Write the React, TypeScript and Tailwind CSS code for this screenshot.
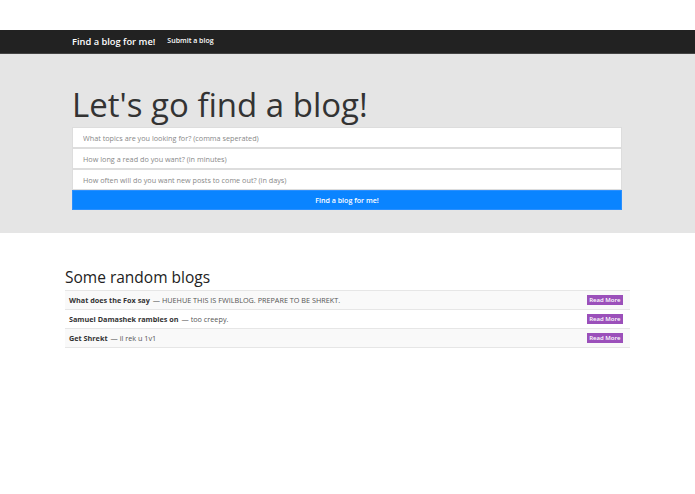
const blogs = [
  { title: "What does the Fox say", blurb: "HUEHUE THIS IS FWILBLOG. PREPARE TO BE SHREKT." },
  { title: "Samuel Damashek rambles on", blurb: "too creepy." },
  { title: "Get Shrekt", blurb: "il rek u 1v1" },
]

const fields = [
  "What topics are you looking for? (comma seperated)",
  "How long a read do you want? (in minutes)",
  "How often will do you want new posts to come out? (in days)",
]

export default function App() {
  return (
    <div className="min-h-[494px] bg-white pt-[30px] font-['Open_Sans',sans-serif]">
      <nav className="flex h-[24px] items-center border-b border-[#444] bg-[#222] px-[72px]">
        <span className="text-[9.3px] font-semibold text-white">Find a blog for me!</span>
        <span className="ml-[12px] text-[7px] font-semibold text-white">Submit a blog</span>
      </nav>
      <section className="bg-[#e5e5e5] px-[72px] pb-[23px] pt-[28px]">
        <h1 className="text-[33px] leading-[46px] text-[#333]">Let's go find a blog!</h1>
        <div className="mr-[1px] mt-[-1px] flex flex-col">
          {fields.map((f) => (
            <input
              key={f}
              placeholder={f}
              className="h-[21px] border border-[#ddd] bg-white px-[10px] text-[7.25px] text-[#555] outline-none placeholder:text-[#888]"
            />
          ))}
          <button className="h-[20px] border border-[#2a8ffe] bg-[#0a84ff] text-[7.1px] font-semibold text-white">
            Find a blog for me!
          </button>
        </div>
      </section>
      <section className="px-[65px] pt-[31px]">
        <h2 className="text-[15.5px] leading-[26px] text-[#222]">Some random blogs</h2>
        <div className="border-t border-[#e6e6e6]">
          {blogs.map((b, i) => (
            <div
              key={b.title}
              className={`flex h-[19px] items-center border-b border-[#e6e6e6] px-[4px] text-[7.25px] ${
                i % 2 === 0 ? "bg-[#f9f9f9]" : "bg-white"
              }`}
            >
              <span className="font-bold text-[#333]">{b.title}</span>
              <span className="ml-[3px] text-[#555]">— {b.blurb}</span>
              <span className="ml-auto mr-[3px] bg-[#9b50ba] px-[2.5px] text-[6px] font-semibold leading-[10px] text-white">
                Read More
              </span>
            </div>
          ))}
        </div>
      </section>
    </div>
  )
}
